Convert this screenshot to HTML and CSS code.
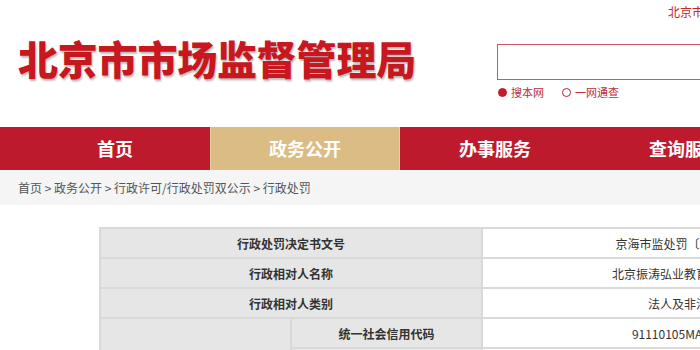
FILE: index.html
```html
<!DOCTYPE html>
<html lang="zh-CN">
<head>
<meta charset="utf-8">
<title>北京市市场监督管理局</title>
<link rel="stylesheet" href="styles.css">
</head>
<body>
<div class="page">
  <header class="header">
    <div class="logo"><h1 class="logo-text">北京市市场监督管理局</h1></div>
    <div class="side">
      <div class="toplink">北京市人民政府</div>
      <div class="search"></div>
      <div class="radios">
        <span class="radio on"></span><span class="rlabel">搜本网</span>
        <span class="radio"></span><span class="rlabel">一网通查</span>
      </div>
    </div>
  </header>
  <nav class="nav">
    <a class="nav-item">首页</a>
    <a class="nav-item active">政务公开</a>
    <a class="nav-item">办事服务</a>
    <a class="nav-item">查询服务</a>
    <a class="nav-item">互动交流</a>
  </nav>
  <div class="crumbs">首页 &gt; 政务公开 &gt; 行政许可/行政处罚双公示 &gt; 行政处罚</div>
  <div class="content">
    <table class="info">
      <colgroup><col class="c1"><col class="c2"><col class="c3"></colgroup>
      <tr><th colspan="2">行政处罚决定书文号</th><td>京海市监处罚〔2021〕1234号</td></tr>
      <tr><th colspan="2">行政相对人名称</th><td>北京振涛弘业教育咨询有限公司</td></tr>
      <tr><th colspan="2">行政相对人类别</th><td>法人及非法人组织</td></tr>
      <tr><th rowspan="6">行政相对人代码</th><th>统一社会信用代码</th><td>91110105MA01ABCD2X</td></tr>
      <tr><th>工商注册号</th><td></td></tr>
      <tr><th>组织机构代码</th><td></td></tr>
      <tr><th>税务登记号</th><td></td></tr>
      <tr><th>事业单位证书号</th><td></td></tr>
      <tr><th>社会组织登记证号</th><td></td></tr>
    </table>
  </div>
</div>
</body>
</html>
```
FILE: styles.css
```css
html, body { margin: 0; padding: 0; overflow: hidden; background: #fff; }
body { font-family: "Noto Sans CJK SC", "Noto Sans", sans-serif; color: #333; }
.page { width: 1200px; }

.header { display: flex; height: 127px; padding-left: 18px; }
.logo { width: 479px; }
.logo-text {
  margin: 0; padding-top: 36px;
  font-size: 40px; line-height: 44px; font-weight: 900;
  color: #c8171f; letter-spacing: -0.2px;
  text-shadow: 1px 2px 2px rgba(0,0,0,0.28);
}
.side { width: 400px; }
.toplink { padding: 4px 0 0 171px; font-size: 12px; line-height: 16px; color: #c0282e; }
.search { margin-top: 24px; height: 34px; border: 1px solid #d5555e; border-right: none; }
.radios { display: flex; align-items: center; margin-top: 4px; font-size: 11px; line-height: 16px; color: #b83040; }
.radio { width: 9px; height: 9px; border-radius: 50%; border: 1px solid #c41c2c; margin-left: 1px; margin-right: 4px; box-sizing: border-box; }
.radio.on { background: #c41c2c; }
.rlabel { margin-right: 17px; }

.nav { display: flex; background: #bd1a2d; height: 43px; padding-left: 20px; }
.nav-item { width: 190px; text-align: center; color: #fff; font-size: 18px; font-weight: 700; line-height: 43px; }
.nav-item.active { background: #dbbc84; box-shadow: inset 1px 0 0 #e8cfa5, inset -1px 0 0 #e8cfa5; }

.crumbs { background: #f5f5f5; height: 35px; line-height: 35px; padding-left: 18px; font-size: 12px; color: #555; }

.content { padding: 22px 0 0 99px; }
.info { border-collapse: collapse; width: 810px; table-layout: fixed; font-size: 12px; }
.c1 { width: 191px; }
.c2 { width: 191px; }
.c3 { width: 428px; }
.info th, .info td { border: 2px solid #d9d9d9; height: 28px; text-align: center; padding: 0; }
.info th { background: #e6e6e6; font-weight: 700; color: #333; }
.info td { background: #fff; color: #333; }
```
